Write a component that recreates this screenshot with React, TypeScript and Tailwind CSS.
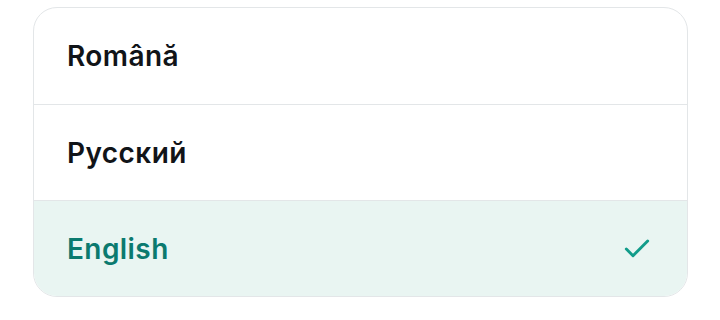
import { Check } from "lucide-react";

const LANGS = [
  { label: "Română", selected: false },
  { label: "Русский", selected: false },
  { label: "English", selected: true },
];

export default function App() {
  return (
    <div className="w-[720px] h-[320px] bg-white pt-[7px] pl-[33px]" style={{ fontFamily: "Inter, 'Noto Sans', sans-serif" }}>
      <div className="w-[655px] rounded-[24px] border border-[#e3e6e8] overflow-hidden">
        {LANGS.map((l, i) => (
          <div
            key={l.label}
            className={
              "flex items-center justify-between h-[96px] pl-[33px] pr-[34px] " +
              (i > 0 ? "border-t border-[#e3e6e8] " : "") +
              (l.selected ? "bg-[#e9f5f2] text-[#0b7a6f]" : "text-[#111418]")
            }
          >
            <span className="text-[28px] font-semibold tracking-[0.015em]">{l.label}</span>
            {l.selected && <Check className="w-[32px] h-[32px] text-[#119c8a]" strokeWidth={2.2} />}
          </div>
        ))}
      </div>
    </div>
  );
}
